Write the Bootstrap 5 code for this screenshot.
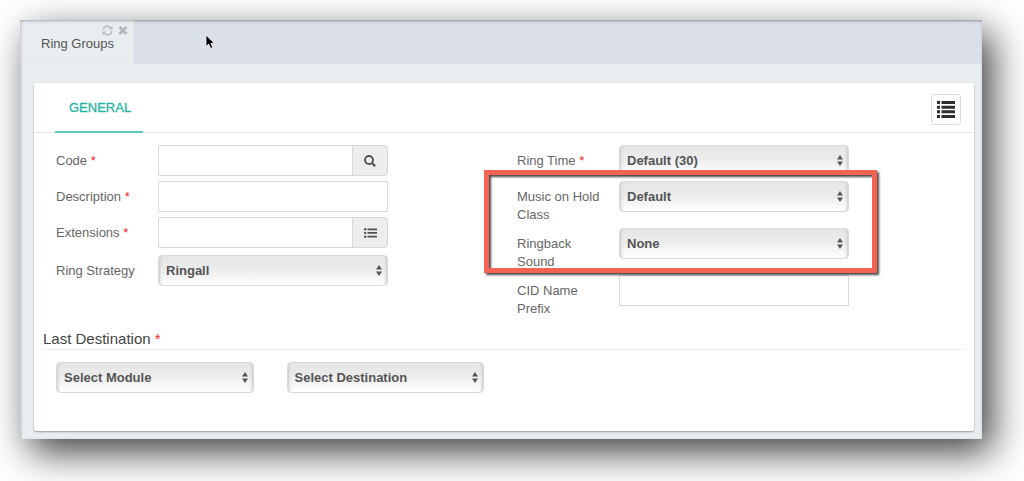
<!DOCTYPE html>
<html lang="en">
<head>
<meta charset="utf-8">
<meta name="viewport" content="width=device-width, initial-scale=1">
<title>Ring Groups</title>
<link href="https://cdn.jsdelivr.net/npm/bootstrap@5.3.0/dist/css/bootstrap.min.css" rel="stylesheet">
<style>
  body { font: 13px/18px "Liberation Sans", Arial, sans-serif; color: #666; background: #fff; padding: 20px 42px 42px 20px; }
  .app-window { background: #e8edf0; box-shadow: inset 0 2px 3px -1px #8b8f97, inset 2px 0 3px -1px #c0c6cb, 10px 13px 36px rgba(0,0,0,.76); }
  .tab-bar { height: 44px; background: #dbdfe8; box-shadow: inset 0 2px 3px -1px #8b8f97; }
  .app-tab { width: 114px; padding: 15px 0 0 21px; background: #e8edf0; color: #555; box-shadow: inset 0 3px 3px -2px #a5a9b0, inset 3px 0 3px -2px #c0c6cb; }
  .tab-tools { top: 5px; right: 6px; gap: 5px; }
  .tab-tools button, .tab-tools svg { display: block; }
  .cursor-mark { left: 185px; top: 14px; }
  .app-body { padding: 19px 8px 8px 14px; }
  .panel { background: #fff; border-radius: 2px; box-shadow: 0 1px 2px rgba(0,0,0,.35); padding-bottom: 38px; }
  .panel-head { height: 50px; border-bottom: 1px solid #e6e6e6; padding: 0 13px 0 21px; }
  .section-tab { padding: 16px 12px 0 14px; margin-bottom: -1px; color: #1fb5a5; border-bottom: 2px solid #5cc9bc; text-decoration: none; -webkit-text-stroke: .3px #1fb5a5; }
  .btn-list { width: 30px; height: 31px; margin-top: 11px; border: 1px solid #dcdcdc; border-radius: 3px; background: #fff; }
  .panel-form { padding: 12px 9px 0; }
  .form-side { padding: 0 13px; }
  .stack { display: grid; gap: 4px; }
  .field-row { display: grid; grid-template-columns: 102px 230fr 103fr; min-height: 32px; }
  .field-row.tall { min-height: 34px; }
  .field-row > label { padding: 7px 14px 0 0; }
  .req { color: #f22; }
  .form-control, .form-select { height: 31px; min-height: 31px; font-size: 13px; line-height: 18px; color: #555; border: 1px solid #dadada; border-radius: 0; padding: 5px 7px; }
  .form-select { font-weight: bold; border-radius: 4px; padding-right: 20px;
    background: url("data:image/svg+xml,%3Csvg xmlns='http://www.w3.org/2000/svg' viewBox='0 0 6 11'%3E%3Cpath fill='%23555' d='M3 0 6 4.5H0zM0 6.5h6L3 11z'/%3E%3C/svg%3E") no-repeat right 5px center / 6px 11px,
      linear-gradient(#e5e5e5, #ececec 45%, #fff);
    box-shadow: inset 4px 0 3px -3px #c8c8c8, inset -4px 0 3px -3px #c8c8c8; }
  .btn-addon { width: 36px; height: 31px; padding: 0; background: #ededed; border: 1px solid #d8d8d8; border-radius: 0 4px 4px 0; }
  .callout-frame { left: -33px; right: 75px; top: -11px; bottom: -2px; border: 5px solid #f26354; filter: drop-shadow(2px 2px 1px rgba(40,40,40,.85)); pointer-events: none; z-index: 2; }
  legend { font-size: 15px; line-height: 20px; color: #444; margin: 11px 0 12px; border-bottom: 1px solid #ededed; }
  .dest-cell { padding: 0 20px 0 13px; }
</style>
</head>
<body>
<main class="app-window">
  <nav class="tab-bar d-flex position-relative" aria-label="Open modules">
    <div class="app-tab position-relative">Ring Groups
      <div class="tab-tools position-absolute d-flex">
        <button type="button" class="border-0 bg-transparent p-0" aria-label="Refresh">
          <svg width="11" height="11" viewBox="0 0 11 11" fill="none" stroke="#b9bcc0" stroke-width="1.5"><path d="M1.2 4.8A4.2 4.2 0 0 1 8.8 3M9.8 6.2A4.2 4.2 0 0 1 2.2 8"/><path d="M10.5.8v3.7H6.8zM.5 10.2V6.5h3.7z" fill="#b9bcc0" stroke="none"/></svg>
        </button>
        <button type="button" class="border-0 bg-transparent p-0" aria-label="Close">
          <svg width="10" height="11" viewBox="0 0 10 11" stroke="#b3b6ba" stroke-width="2.8"><path d="M1.5 2l7 7M8.5 2l-7 7"/></svg>
        </button>
      </div>
    </div>
    <svg class="cursor-mark position-absolute" width="11" height="17" viewBox="0 0 11 17" aria-hidden="true"><path d="M1 1v11.5l2.7-2.4 1.9 4.4 2.2-.9-1.9-4.3h3.6z" fill="#000" stroke="#fff" stroke-width=".8"/></svg>
  </nav>
  <div class="app-body">
    <section class="panel">
      <header class="panel-head d-flex justify-content-between">
        <a href="#general" class="section-tab">GENERAL</a>
        <button type="button" class="btn-list p-0 d-flex align-items-center justify-content-center" aria-label="Show list">
          <svg width="18" height="17" viewBox="0 0 18 17" fill="#2e2e30"><path d="M0 0h3v3H0zM4.500 0H18v3H4.500zM0 4.700h3v3H0zM4.500 4.700H18v3H4.500zM0 9.300h3v3H0zM4.500 9.300H18v3H4.500zM0 14h3v3H0zM4.500 14H18v3H4.500z"/></svg>
        </button>
      </header>
      <form class="panel-form" id="general">
        <div class="row g-0">
          <div class="col-6 form-side"><div class="stack">
            <div class="field-row">
              <label for="code">Code <span class="req">*</span></label>
              <div class="d-flex">
                <input id="code" type="text" class="form-control border-end-0">
                <button type="button" class="btn-addon flex-shrink-0" aria-label="Search">
                  <svg width="12" height="12" viewBox="0 0 12 12" fill="none" stroke="#505050"><circle cx="5" cy="5" r="4" stroke-width="1.8"/><path d="M8 8l3.200 3.200" stroke-width="2.200"/></svg>
                </button>
              </div>
            </div>
            <div class="field-row">
              <label for="description">Description <span class="req">*</span></label>
              <div><input id="description" type="text" class="form-control"></div>
            </div>
            <div class="field-row tall">
              <label for="extensions">Extensions <span class="req">*</span></label>
              <div class="d-flex">
                <input id="extensions" type="text" class="form-control border-end-0">
                <button type="button" class="btn-addon flex-shrink-0" aria-label="Choose extensions">
                  <svg width="13" height="10" viewBox="0 0 13 10" fill="#505050"><path d="M3.500.5H13v1.700H3.500zM3.500 4.100H13v1.700H3.500zM3.500 7.800H13v1.700H3.500z"/><circle cx="1.200" cy="1.300" r="1.200"/><circle cx="1.200" cy="5" r="1.200"/><circle cx="1.200" cy="8.700" r="1.200"/></svg>
                </button>
              </div>
            </div>
            <div class="field-row">
              <label for="strategy" class="pe-0">Ring Strategy</label>
              <div><select id="strategy" class="form-select"><option>Ringall</option></select></div>
            </div>
          </div></div>
          <div class="col-6 form-side"><div class="stack">
            <div class="field-row">
              <label for="ringtime">Ring Time <span class="req">*</span></label>
              <div><select id="ringtime" class="form-select"><option>Default (30)</option></select></div>
            </div>
            <div class="stack position-relative">
              <div class="field-row">
                <label for="moh">Music on Hold Class</label>
                <div><select id="moh" class="form-select"><option>Default</option></select></div>
              </div>
              <div class="field-row">
                <label for="ringback">Ringback Sound</label>
                <div><select id="ringback" class="form-select"><option>None</option></select></div>
              </div>
              <div class="callout-frame position-absolute"></div>
            </div>
            <div class="field-row">
              <label for="cid">CID Name Prefix</label>
              <div><input id="cid" type="text" class="form-control"></div>
            </div>
          </div></div>
        </div>
        <fieldset>
          <legend>Last Destination <span class="req">*</span></legend>
          <div class="row g-0">
            <div class="col-3 dest-cell"><select class="form-select" aria-label="Module"><option>Select Module</option></select></div>
            <div class="col-3 dest-cell"><select class="form-select" aria-label="Destination"><option>Select Destination</option></select></div>
          </div>
        </fieldset>
      </form>
    </section>
  </div>
</main>
<script src="https://cdn.jsdelivr.net/npm/bootstrap@5.3.0/dist/js/bootstrap.bundle.min.js"></script>
</body>
</html>
